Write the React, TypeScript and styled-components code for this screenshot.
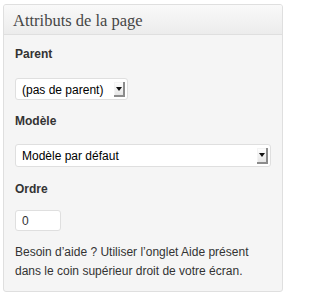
import React from 'react';
import styled, { createGlobalStyle } from 'styled-components';

const GlobalStyle = createGlobalStyle`
  html,
  body {
    margin: 0;
    padding: 0;
    background: #fff;
  }

  body {
    font-family: 'Liberation Sans', Arial, sans-serif;
    font-size: 12px;
    color: #333;
  }
`;

const Page = styled.div`
  padding: 4px 0 0 3px;
`;

const Box = styled.div`
  box-sizing: border-box;
  width: 280px;
  border: 1px solid #dfdfdf;
  border-radius: 3px;
  background: #f5f5f5;
  overflow: hidden;
`;

const Header = styled.h3`
  box-sizing: border-box;
  margin: 0;
  height: 30px;
  padding: 6px 9px 0;
  border-bottom: 1px solid #dfdfdf;
  background: linear-gradient(to bottom, #f9f9f9, #ececec);
  font-family: 'Liberation Serif', Georgia, serif;
  font-size: 16.5px;
  font-weight: normal;
  line-height: normal;
  color: #464646;
`;

const Inside = styled.div`
  padding: 11px 10px 10px 11px;
`;

const Label = styled.p<{ $top?: number }>`
  margin: ${({ $top }) => $top ?? 0}px 0 0;
  font-weight: bold;
  font-size: 12px;
  line-height: 16px;
  color: #333;
`;

const Select = styled.div<{ $width: number; $height: number; $top: number }>`
  box-sizing: border-box;
  display: flex;
  align-items: center;
  width: ${({ $width }) => $width}px;
  height: ${({ $height }) => $height}px;
  margin-top: ${({ $top }) => $top}px;
  padding: 3px 2px 2px 6px;
  border: 1px solid #dfdfdf;
  border-radius: 3px;
  background: #fff;
  font-size: 12px;
  color: #000;
`;

const SelectText = styled.span`
  flex: 1;
  white-space: nowrap;
`;

const ArrowButton = styled.span`
  display: flex;
  align-items: center;
  justify-content: center;
  align-self: stretch;
  width: 11px;
  background: linear-gradient(to bottom, #ffffff, #e2e2e2);
  box-shadow: inset -2px -2px 0 #8c8c8c, inset 1px 1px 0 #f4f4f4;

  &::after {
    content: '';
    margin: 0 2px 2px 0;
    border-left: 3px solid transparent;
    border-right: 3px solid transparent;
    border-top: 4px solid #111;
  }
`;

const NumberInput = styled.div`
  box-sizing: border-box;
  display: flex;
  align-items: center;
  width: 46px;
  height: 21px;
  margin-top: 13px;
  padding: 1px 6px 0;
  border: 1px solid #dfdfdf;
  border-radius: 3px;
  background: #fff;
  font-size: 12px;
  color: #333;
`;

const Help = styled.p`
  margin: 12px 0 0;
  font-size: 12px;
  line-height: 19px;
  color: #333;
`;

export default function App() {
  return (
    <Page>
      <GlobalStyle />
      <Box>
        <Header>Attributs de la page</Header>
        <Inside>
          <Label>Parent</Label>
          <Select $width={113} $height={22} $top={16}>
            <SelectText>(pas de parent)</SelectText>
            <ArrowButton />
          </Select>
          <Label $top={13}>Modèle</Label>
          <Select $width={256} $height={23} $top={15}>
            <SelectText>Modèle par défaut</SelectText>
            <ArrowButton />
          </Select>
          <Label $top={14}>Ordre</Label>
          <NumberInput>0</NumberInput>
          <Help>
            Besoin d’aide ? Utiliser l’onglet Aide présent dans le coin
            supérieur droit de votre écran.
          </Help>
        </Inside>
      </Box>
    </Page>
  );
}
